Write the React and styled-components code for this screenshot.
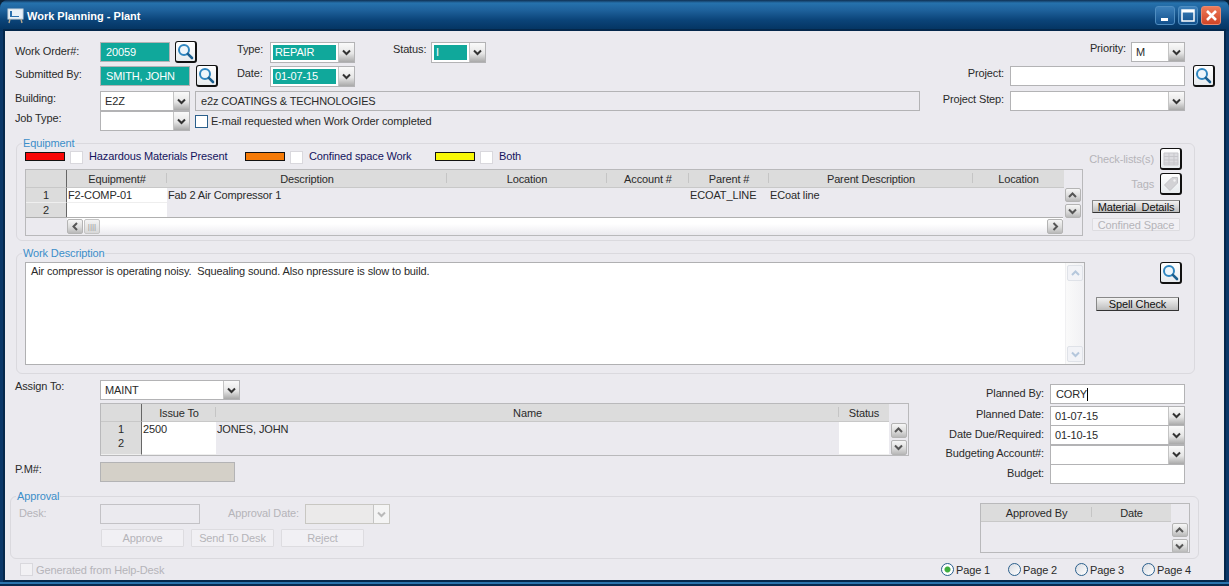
import React from 'react'
import styled, { createGlobalStyle } from 'styled-components'

const Global = createGlobalStyle`
  html, body {
    margin: 0;
    padding: 0;
    background: #0b2238;
    overflow: hidden;
  }
  * { box-sizing: border-box; }
`

const Win = styled.div`
  width: 1229px;
  height: 586px;
  display: flex;
  flex-direction: column;
  font-family: "Liberation Sans", Arial, sans-serif;
  font-size: 11px;
  letter-spacing: -0.13px;
  color: #2a2a2a;
  background: #0a3768;
  border-radius: 8px 8px 0 0;
  overflow: hidden;
`

const TitleBar = styled.div`
  height: 31px;
  flex: none;
  display: flex;
  align-items: center;
  padding: 0 8px 0 7px;
  background: linear-gradient(#0f2f52 0, #2672ad 3px, #1d5f99 11px, #0b4479 20px, #03325f 31px);
`

const TitleText = styled.span`
  margin-left: 3px;
  font-size: 11px;
  letter-spacing: 0;
  font-weight: bold;
  color: #fff;
  flex: 1;
`

const WinBtn = styled.div`
  width: 20px;
  height: 19px;
  margin-left: 3px;
  border-radius: 3px;
  border: 1px solid ${p => (p.$close ? '#e88a70' : '#4f8dc0')};
  background: ${p => (p.$close
    ? 'linear-gradient(#ee7a58, #cf4527)'
    : 'linear-gradient(#3d81bb, #12508c)')};
  display: flex;
  align-items: center;
  justify-content: center;
`

const Frame = styled.div`
  flex: none;
  height: 549px;
  margin: 0 5px;
  background: #ebeaef;
  box-shadow: 0 0 0 2px #04274b;
  display: flex;
  flex-direction: column;
`

const BottomEdge = styled.div`
  flex: 1;
  margin-top: 2px;
  border-bottom: 2px solid #06294f;
  background: #2b74ad;
`

const Top = styled.div`
  height: 92px;
  margin-top: 9px;
  flex: none;
  display: flex;
  justify-content: space-between;
  padding: 0 9px 0 10px;
`

const FormGrid = styled.div`
  display: grid;
  grid-template-columns: ${p => p.$cols};
  grid-auto-rows: ${p => p.$rows || '20px'};
  align-items: center;
  margin-top: ${p => p.$top || 0}px;
`

const PriorityCell = styled.div`
  grid-column: 1 / 4;
  display: flex;
  justify-content: flex-end;
  align-items: center;
  gap: 5px;
`

const Label = styled.span`
  white-space: nowrap;
  color: ${p => (p.$off ? '#b5b4b9' : '#2a2a2a')};
  text-align: ${p => (p.$right ? 'right' : 'left')};
  padding-bottom: ${p => p.$lift || 0}px;
  width: ${p => (p.$w ? `${p.$w}px` : 'auto')};
  flex: ${p => (p.$w ? 'none' : '0 1 auto')};
`

const Field = styled.div`
  width: ${p => (p.$w ? `${p.$w}px` : '100%')};
  height: ${p => p.$h || 20}px;
  flex: none;
  border: 1px solid ${p => (p.$off ? '#c3c2c6' : '#b3b3b5')};
  background: ${p => p.$bg || '#fff'};
  color: ${p => p.$color || '#2a2a2a'};
  padding: 0 5px;
  display: flex;
  align-items: center;
  white-space: nowrap;
`

const Caret = styled.i`
  display: inline-block;
  width: 1px;
  height: 13px;
  background: #000;
`

const SelectBox = styled.div`
  width: ${p => (p.$w ? `${p.$w}px` : '100%')};
  height: ${p => p.$h || 20}px;
  flex: none;
  display: flex;
  border: 1px solid ${p => (p.$off ? '#c8c7c2' : '#b3b3b5')};
  background: ${p => (p.$off ? '#ebeaea' : '#fff')};
  padding: ${p => (p.$teal ? '2px 0 2px 2px' : '0')};
  margin-left: ${p => p.$left || 0}px;
`

const SelectValue = styled.div`
  flex: 1;
  min-width: 0;
  display: flex;
  align-items: center;
  padding: 0 ${p => (p.$teal ? 2 : 4)}px;
  margin-right: ${p => (p.$teal ? 2 : 0)}px;
  background: ${p => (p.$teal ? '#10a89b' : 'transparent')};
  color: ${p => (p.$teal ? '#fff' : '#2a2a2a')};
`

const DropBtn = styled.div`
  width: 16px;
  flex: none;
  margin: ${p => (p.$teal ? '-2px 0' : '0')};
  display: flex;
  align-items: center;
  justify-content: center;
  border-left: 1px solid #c4c4c4;
  background: ${p => (p.$off
    ? '#f4f4f4'
    : 'linear-gradient(#fafafa, #e6e6e6 55%, #a9a9a9)')};
`

const ArrowBtn = styled.div`
  width: ${p => p.$w || 16}px;
  height: ${p => p.$h || 16}px;
  flex: none;
  display: flex;
  align-items: center;
  justify-content: center;
  border: 1px solid ${p => (p.$off ? '#dfe2e8' : '#b4b4b4')};
  border-radius: 2px;
  background: ${p => (p.$off
    ? '#f2f3f7'
    : 'linear-gradient(#f6f6f6, #dcdcdc 55%, #b9b9b9)')};
`

const IconBtn = styled.div`
  width: 22px;
  height: 22px;
  flex: none;
  display: flex;
  align-items: center;
  justify-content: center;
  border: 1px solid #111;
  border-right-width: 2px;
  border-bottom-width: 2px;
  border-radius: 3px;
  background: linear-gradient(#ffffff, #e7ebee);
`

const LookupCell = styled.div`
  display: flex;
  align-items: center;
  gap: ${p => p.$gap || 5}px;
`

const MailRow = styled.div`
  grid-column: 3 / 5;
  display: flex;
  align-items: center;
  gap: 3px;
  padding-left: 5px;
`

const Box = styled.span`
  width: 13px;
  height: 13px;
  flex: none;
  display: block;
  background: ${p => (p.$off ? '#f2f1f4' : '#fff')};
  border: 1px solid ${p => p.$line || '#d9d8dd'};
`

const LeftCol = styled.div`
  width: 905px;
`

const RightCol = styled.div`
  width: 274px;
`

const Group = styled.div`
  position: relative;
  flex: none;
  display: flex;
  width: ${p => p.$w || 1179}px;
  margin: ${p => p.$margin};
  height: ${p => p.$h}px;
  padding: ${p => p.$pad};
  border: 1px solid #dad9de;
  border-radius: 6px;
`

const Legend = styled.span`
  position: absolute;
  top: -7px;
  left: 5px;
  padding: 0 1px;
  background: #ebeaef;
  color: #3b8ec9;
  line-height: 13px;
`

const FlagRow = styled.div`
  display: flex;
  align-items: center;
  height: 14px;
  margin-bottom: 5px;
`

const Flag = styled.div`
  width: ${p => p.$w}px;
  display: flex;
  align-items: center;
  color: #14145e;
`

const Swatch = styled.span`
  width: 40px;
  height: 9px;
  margin: 0 5px 2px 0;
  background: ${p => p.$c};
  border: 1px solid #111;
`

const FlagText = styled.span`
  margin-left: 6px;
  padding-bottom: 2px;
`

const GridFrame = styled.div`
  width: ${p => p.$w}px;
  height: ${p => p.$h}px;
  margin-top: ${p => p.$top || 0}px;
  flex: none;
  display: flex;
  border: 1px solid #b9b9bb;
  background: #ebeaef;
  overflow: hidden;
`

const GridMain = styled.div`
  flex: 1;
  min-width: 0;
  display: flex;
  flex-direction: column;
`

const GridRow = styled.div`
  display: grid;
  grid-template-columns: ${p => p.$cols};
  height: ${p => p.$h}px;
  flex: none;
`

const HeadCell = styled.div`
  background: #dcdcdc;
  border-bottom: 1px solid #c8c8c8;
  border-right: ${p => (p.$corner ? '1px solid #666' : 'none')};
  display: flex;
  align-items: center;
  justify-content: center;
  position: relative;
  &:not(:last-child)::after {
    content: '';
    display: ${p => (p.$corner ? 'none' : 'block')};
    position: absolute;
    right: 0;
    top: 3px;
    bottom: 4px;
    width: 1px;
    background: #c5c5c5;
  }
`

const RowHead = styled.div`
  background: #dcdcdc;
  border-right: 1px solid #666;
  border-bottom: 1px solid #efefef;
  text-align: center;
  line-height: 14px;
`

const Cell = styled.div`
  background: ${p => (p.$white ? '#fff' : 'transparent')};
  border-bottom: 1px solid ${p => (p.$white ? '#eeeeee' : 'transparent')};
  padding: 0 1px;
  line-height: 14px;
  white-space: nowrap;
`

const HScroll = styled.div`
  flex: 1;
  display: flex;
  align-items: center;
  border-top: 1px solid #b0b0b0;
  padding-left: 41px;
  background: linear-gradient(to right, #ebeaef 41px, transparent 41px),
    linear-gradient(#ffffff, #ffffff 35%, #ebeaef);
`

const Thumb = styled.div`
  width: 16px;
  height: 15px;
  margin-left: 1px;
  margin-right: auto;
  border: 1px solid #c4c4c4;
  border-radius: 2px;
  background: linear-gradient(#f4f4f4, #d8d8d8);
  display: flex;
  align-items: center;
  justify-content: center;
  color: #999;
  font-size: 8px;
  letter-spacing: 0;
`

const Rail = styled.div`
  width: 19px;
  flex: none;
  display: flex;
  flex-direction: column;
  align-items: center;
  gap: 2px;
  padding-top: ${p => p.$top || 18}px;
`

const SideCol = styled.div`
  width: 98px;
  margin-left: 5px;
  margin-top: -2px;
  display: flex;
  flex-direction: column;
  align-items: flex-end;
`

const SideRow = styled.div`
  display: flex;
  align-items: center;
  gap: 6px;
  margin-right: 4px;
  margin-bottom: 3px;
`

const ToolBtn = styled.div`
  width: ${p => p.$w}px;
  height: ${p => p.$h || 14}px;
  margin: ${p => p.$margin || 0};
  flex: none;
  display: flex;
  align-items: center;
  justify-content: center;
  border: 1px solid ${p => (p.$off ? '#dddce0' : '#333')};
  border-top-color: ${p => (p.$off ? '#dddce0' : '#888')};
  border-left-color: ${p => (p.$off ? '#dddce0' : '#888')};
  border-radius: 1px;
  color: ${p => (p.$off ? '#b5b4b9' : '#111')};
  background: ${p => (p.$off ? '#f1f0f4' : 'linear-gradient(#f2f2f2, #d8d8d8 50%, #bcbcbc)')};
`

const TextBox = styled.div`
  width: 1060px;
  height: 103px;
  flex: none;
  display: flex;
  justify-content: space-between;
  border: 1px solid #b0b0b2;
  background: #fff;
`

const TextBody = styled.div`
  padding: 2px 5px;
  line-height: 13px;
  white-space: pre;
`

const TextRail = styled.div`
  width: 19px;
  display: flex;
  flex-direction: column;
  justify-content: space-between;
  align-items: center;
  padding: 2px 0;
  background: linear-gradient(to right, #fafafa, #f1f1f4);
  border-left: 1px solid #f0f0f2;
`

const WorkSide = styled.div`
  flex: 1;
  display: flex;
  flex-direction: column;
  align-items: flex-end;
  padding-right: 4px;
`

const Assign = styled.div`
  height: 121px;
  flex: none;
  display: flex;
  justify-content: space-between;
  padding: 6px 39px 0 10px;
`

const AssignLeft = styled.div`
  display: flex;
  flex-direction: column;
`

const AssignRow = styled.div`
  display: flex;
  align-items: center;
  margin: ${p => p.$margin || 0};
`

const PlanCol = styled.div`
  margin-top: 4px;
`

const DeskCol = styled.div`
  display: flex;
  flex-direction: column;
  flex: 1;
`

const ActionRow = styled.div`
  display: flex;
  gap: 7px;
  margin: 5px 0 0 82px;
`

const Footer = styled.div`
  flex: 1;
  display: flex;
  align-items: center;
  justify-content: space-between;
  padding: 0 0 0 15px;
`

const HelpDesk = styled.div`
  display: flex;
  align-items: center;
  gap: 3px;
  color: #b5b4b9;
`

const Pages = styled.div`
  display: flex;
  width: 283px;
`

const PageOpt = styled.div`
  width: 67px;
  display: flex;
  align-items: center;
  gap: 2px;
`

const Radio = styled.span`
  width: 13px;
  height: 13px;
  flex: none;
  border-radius: 50%;
  border: 1px solid #2a5f8c;
  background: ${p => (p.$on
    ? 'radial-gradient(circle, #3fae3f 0, #3fae3f 2.5px, #fff 3.5px)'
    : 'linear-gradient(135deg, #d9dce2, #ffffff)')};
`

const Chevron = ({ dir = 'down', color = '#333', w = 9, sw = 2 }) => {
  const paths = {
    down: '1,1.5 4.5,5 8,1.5',
    up: '1,5 4.5,1.5 8,5',
  }
  if (dir === 'left' || dir === 'right') {
    const pts = dir === 'left' ? '5,1 1.5,4.5 5,8' : '1.5,1 5,4.5 1.5,8'
    return (
      <svg width="7" height={w} viewBox="0 0 7 9">
        <polyline points={pts} fill="none" stroke={color} strokeWidth={sw} />
      </svg>
    )
  }
  return (
    <svg width={w} height="7" viewBox="0 0 9 7">
      <polyline points={paths[dir]} fill="none" stroke={color} strokeWidth={sw} />
    </svg>
  )
}

const Lens = () => (
  <svg width="17" height="17" viewBox="0 0 17 17">
    <circle cx="7" cy="7" r="5" fill="#eef6fb" stroke="#2f86c0" strokeWidth="2" />
    <line x1="10.8" y1="10.8" x2="15" y2="15" stroke="#1b5f8f" strokeWidth="2.6" strokeLinecap="round" />
  </svg>
)

const Search = () => (
  <IconBtn>
    <Lens />
  </IconBtn>
)

const Select = ({ value, w, h, teal, off, left }) => (
  <SelectBox $w={w} $h={h} $teal={teal} $off={off} $left={left}>
    <SelectValue $teal={teal}>{value}</SelectValue>
    <DropBtn $teal={teal} $off={off}>
      <Chevron color={off ? '#b9b9b9' : '#333'} />
    </DropBtn>
  </SelectBox>
)

const ScrollPair = ({ top, h = 14 }) => (
  <Rail $top={top}>
    <ArrowBtn $h={h}><Chevron dir="up" color="#555" /></ArrowBtn>
    <ArrowBtn $h={h}><Chevron dir="down" color="#555" /></ArrowBtn>
  </Rail>
)

const GridSheet = ({ cols, columns, rows, rowH = [15, 14] }) => (
  <GridMain>
    <GridRow $cols={cols} $h={18}>
      <HeadCell $corner />
      {columns.map(c => <HeadCell key={c}>{c}</HeadCell>)}
    </GridRow>
    {rows.map((r, i) => (
      <GridRow key={i} $cols={cols} $h={rowH[i]}>
        <RowHead>{rowH[i] > 10 ? i + 1 : ''}</RowHead>
        {r.map((c, j) => (
          <Cell key={j} $white={j === 0 || (columns[j] === 'Status')}>{c}</Cell>
        ))}
      </GridRow>
    ))}
  </GridMain>
)

const equipCols = '41px 100px 280px 160px 82px 80px 204px 91px'
const equipColumns = ['Equipment#', 'Description', 'Location', 'Account #', 'Parent #', 'Parent Description', 'Location ']
const issueCols = '41px 74px 623px 50px'

export default function App() {
  return (
    <Win>
      <Global />
      <TitleBar>
        <svg width="17" height="17" viewBox="0 0 17 17">
          <rect x="1" y="2" width="15" height="10" fill="#e8f0f8" stroke="#c9d4dc" />
          <rect x="3" y="4" width="2" height="5" fill="#2a6fae" />
          <rect x="3" y="9" width="9" height="1" fill="#2a6fae" />
          <path d="M3 12 L2 16 M14 12 L15 16" stroke="#b7a98f" strokeWidth="1.4" />
        </svg>
        <TitleText>Work Planning - Plant</TitleText>
        <WinBtn>
          <svg width="12" height="12" viewBox="0 0 12 12"><rect x="2" y="8" width="7" height="3" fill="#fff" /></svg>
        </WinBtn>
        <WinBtn>
          <svg width="14" height="13" viewBox="0 0 14 13"><rect x="1" y="1" width="12" height="11" fill="none" stroke="#fff" strokeWidth="1.5" /><rect x="1" y="1" width="12" height="2.5" fill="#fff" /></svg>
        </WinBtn>
        <WinBtn $close>
          <svg width="13" height="13" viewBox="0 0 13 13"><path d="M2 2 L11 11 M11 2 L2 11" stroke="#fff" strokeWidth="2.6" /></svg>
        </WinBtn>
      </TitleBar>

      <Frame>
        <Top>
          <LeftCol>
            <FormGrid $cols="85px 137px 33px 85px 38px 38px 55px" $rows="24px">
              <Label $lift={2}>Work Order#:</Label>
              <LookupCell>
                <Field $w={70} $bg="#10a89b" $color="#fff">20059</Field>
                <Search />
              </LookupCell>
              <Label $lift={6}>Type:</Label>
              <Select value="REPAIR" w={85} h={21} teal />
              <span />
              <Label $lift={6}>Status:</Label>
              <Select value="I" w={55} h={21} teal />

              <Label $lift={4}>Submitted By:</Label>
              <LookupCell $gap={6}>
                <Field $w={90} $bg="#10a89b" $color="#fff">SMITH, JOHN</Field>
                <Search />
              </LookupCell>
              <Label $lift={6}>Date:</Label>
              <Select value="01-07-15" w={85} h={21} teal />
            </FormGrid>
            <FormGrid $cols="85px 90px 5px 725px" $rows="20px" $top={3}>
              <Label $lift={7}>Building:</Label>
              <Select value="E2Z" />
              <span />
              <Field $bg="#ebeaef">e2z COATINGS &amp; TECHNOLOGIES</Field>

              <Label $lift={6}>Job Type:</Label>
              <Select value="" />
              <MailRow>
                <Box $line="#2a5f8c" />
                <span>E-mail requested when Work Order completed</span>
              </MailRow>
            </FormGrid>
          </LeftCol>

          <RightCol>
            <FormGrid $cols="63px 6px 175px 8px 22px" $rows="24px">
              <PriorityCell>
                <Label $lift={8}>Priority:</Label>
                <Select value="M" w={54} />
              </PriorityCell>
              <span />
              <span />

              <Label $right $lift={6}>Project:</Label>
              <span />
              <Field />
              <span />
              <Search />
            </FormGrid>
            <FormGrid $cols="63px 6px 175px" $rows="20px" $top={3}>
              <Label $right $lift={5}>Project Step:</Label>
              <span />
              <Select value="" />
            </FormGrid>
          </RightCol>
        </Top>

        <Group $margin="11px 0 0 11px" $h={98} $pad="6px 8px 0">
          <Legend>Equipment</Legend>
          <div>
            <FlagRow>
              <Flag $w={220}>
                <Swatch $c="#f80606" />
                <Box />
                <FlagText>Hazardous Materials Present</FlagText>
              </Flag>
              <Flag $w={190}>
                <Swatch $c="#f57a07" />
                <Box />
                <FlagText>Confined space Work</FlagText>
              </Flag>
              <Flag $w={120}>
                <Swatch $c="#f8f806" />
                <Box />
                <FlagText>Both</FlagText>
              </Flag>
            </FlagRow>
            <GridFrame $w={1058} $h={67}>
              <GridMain>
                <GridSheet
                  cols={equipCols}
                  columns={equipColumns}
                  rows={[
                    ['F2-COMP-01', 'Fab 2 Air Compressor 1', '', '', 'ECOAT_LINE', 'ECoat line', ''],
                    ['', '', '', '', '', '', ''],
                  ]}
                />
                <HScroll>
                  <ArrowBtn $h={15} $w={16}><Chevron dir="left" color="#555" /></ArrowBtn>
                  <Thumb>||||</Thumb>
                  <ArrowBtn $h={15} $w={16}><Chevron dir="right" color="#555" /></ArrowBtn>
                </HScroll>
              </GridMain>
              <ScrollPair />
            </GridFrame>
          </div>
          <SideCol>
            <SideRow>
              <Label $off>Check-lists(s)</Label>
              <IconBtn>
                <svg width="16" height="16" viewBox="0 0 16 16">
                  <path d="M1 2h14v12H1z M1 5.5h14 M1 9h14 M1 12h14 M6 2v12 M11 2v12" fill="#dcdce0" stroke="#c7c7cb" />
                </svg>
              </IconBtn>
            </SideRow>
            <SideRow>
              <Label $off>Tags</Label>
              <IconBtn>
                <svg width="16" height="16" viewBox="0 0 16 16">
                  <path d="M9 1.5h5.5V7L7 14.5 1.5 9z" fill="#d2d2d5" stroke="#c2c2c6" />
                  <circle cx="11.5" cy="4.5" r="1.2" fill="#f2f2f4" />
                </svg>
              </IconBtn>
            </SideRow>
            <ToolBtn $w={88} $h={13} $margin="2px 6px 0 0">Material&nbsp; Details</ToolBtn>
            <ToolBtn $w={88} $h={13} $margin="5px 6px 0 0" $off>Confined Space</ToolBtn>
          </SideCol>
        </Group>

        <Group $margin="12px 0 0 11px" $h={121} $pad="8px 8px 0">
          <Legend>Work Description</Legend>
          <TextBox>
            <TextBody>Air compressor is operating noisy.  Squealing sound. Also npressure is slow to build.</TextBody>
            <TextRail>
              <ArrowBtn $off $w={16}><Chevron dir="up" color="#b5c7dc" /></ArrowBtn>
              <ArrowBtn $off $w={16}><Chevron dir="down" color="#b5c7dc" /></ArrowBtn>
            </TextRail>
          </TextBox>
          <WorkSide>
            <Search />
            <ToolBtn $w={83} $margin="13px 3px 0 0">Spell Check</ToolBtn>
          </WorkSide>
        </Group>

        <Assign>
          <AssignLeft>
            <AssignRow>
              <Label $w={85} $lift={8}>Assign To:</Label>
              <Select value="MAINT" w={140} />
            </AssignRow>
            <AssignRow $margin="3px 0 0 85px">
              <GridFrame $w={809} $h={53}>
                <GridSheet
                  cols={issueCols}
                  columns={['Issue To', 'Name', 'Status']}
                  rows={[
                    ['2500', 'JONES, JOHN', ''],
                    ['', '', ''],
                    ['', '', ''],
                  ]}
                  rowH={[14, 14, 5]}
                />
                <ScrollPair top={19} h={15} />
              </GridFrame>
            </AssignRow>
            <AssignRow $margin="6px 0 0">
              <Label $w={85} $lift={6}>P.M#:</Label>
              <Field $w={135} $bg="#d4d0c8" />
            </AssignRow>
          </AssignLeft>
          <PlanCol>
            <FormGrid $cols="135px 6px 135px" $rows="20px">
              <Label $right $lift={2}>Planned By:</Label>
              <span />
              <Field>CORY<Caret /></Field>
            </FormGrid>
            <FormGrid $cols="135px 6px 135px" $rows="19.5px" $top={2}>
              <Label $right $lift={3}>Planned Date:</Label>
              <span />
              <Select value="01-07-15" />
              <Label $right $lift={3}>Date Due/Required:</Label>
              <span />
              <Select value="01-10-15" />
              <Label $right $lift={3}>Budgeting Account#:</Label>
              <span />
              <Select value="" />
              <Label $right $lift={2}>Budget:</Label>
              <span />
              <Field />
            </FormGrid>
          </PlanCol>
        </Assign>

        <Group $w={1189} $margin="1px 0 0 5px" $h={63} $pad="7px 8px 0">
          <Legend>Approval</Legend>
          <DeskCol>
            <AssignRow>
              <Label $off $lift={2} $w={81}>Desk:</Label>
              <Field $w={100} $off $bg="#ebeaef" />
              <Label $off $right $lift={2} $w={99}>Approval Date:</Label>
              <Select value="" w={85} off left={6} />
            </AssignRow>
            <ActionRow>
              <ToolBtn $w={83} $h={18} $off>Approve</ToolBtn>
              <ToolBtn $w={83} $h={18} $off>Send To Desk</ToolBtn>
              <ToolBtn $w={83} $h={18} $off>Reject</ToolBtn>
            </ActionRow>
          </DeskCol>
          <GridFrame $w={210} $h={50} $top={-1}>
            <GridMain>
              <GridRow $cols="111px 79px" $h={18}>
                <HeadCell>Approved By</HeadCell>
                <HeadCell>Date</HeadCell>
              </GridRow>
            </GridMain>
            <ScrollPair top={19} />
          </GridFrame>
        </Group>

        <Footer>
          <HelpDesk>
            <Box $off />
            <span>Generated from Help-Desk</span>
          </HelpDesk>
          <Pages>
            <PageOpt><Radio $on />Page 1</PageOpt>
            <PageOpt><Radio />Page 2</PageOpt>
            <PageOpt><Radio />Page 3</PageOpt>
            <PageOpt><Radio />Page 4</PageOpt>
          </Pages>
        </Footer>
      </Frame>
      <BottomEdge />
    </Win>
  )
}
